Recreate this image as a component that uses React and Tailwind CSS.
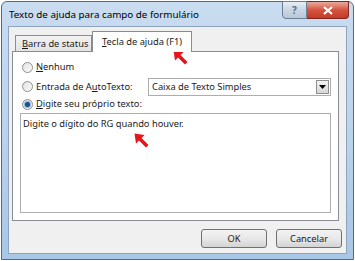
import React from 'react';

const Arrow = ({ className }) => (
  <svg className={className} width="16" height="16" viewBox="0 0 16 16">
    <path d="M0.5 0.5 L10.5 2 L7.5 5 L14.5 12 L12 14.5 L5 7.5 L2 10.5 Z" fill="#e8141a" />
  </svg>
);

const Radio = ({ checked }) => (
  <span className="w-[11px] h-[11px] rounded-full border border-[#8e8f8f] bg-gradient-to-br from-[#e2e2e2] to-[#fbfbfb] flex items-center justify-center shrink-0">
    {checked && <span className="w-[5px] h-[5px] rounded-full bg-[#1c4f8a] shadow-[0_0_1px_1px_#7fb0e0]" />}
  </span>
);

export default function App() {
  return (
    <div className="w-[355px] h-[261px] bg-white p-[1px] overflow-hidden" style={{ fontFamily: '"Noto Sans", "Open Sans", sans-serif' }}>
      <div className="relative w-full h-full border border-[#4e6b8c] rounded-t-[6px] bg-gradient-to-b from-[#c9dcf0] via-[#bcd3ec] to-[#a8c6e6] flex flex-col px-[6px] pb-[5px]">
        {/* title bar */}
        <div className="h-[24px] flex items-start justify-between shrink-0">
          <span className="text-[9.8px] text-black pt-[6px] pl-[1px] whitespace-nowrap">Texto de ajuda para campo de formulário</span>
          <div className="flex -mt-[1px] mr-[-2px]">
            <div className="w-[25px] h-[18px] rounded-bl-[4px] border border-[#6d7f94] bg-gradient-to-b from-[#e8eef5] via-[#cbd6e3] to-[#b8c6d6] flex items-center justify-center text-[10px] font-bold text-[#5b6d82]">?</div>
            <div className="w-[42px] h-[18px] rounded-br-[4px] border border-l-0 border-[#7a2a20] bg-gradient-to-b from-[#e9a99c] via-[#d3533f] to-[#c43b27] flex items-center justify-center">
              <svg width="10" height="9" viewBox="0 0 10 9">
                <path d="M1 1 L9 8 M9 1 L1 8" stroke="white" strokeWidth="2.2" />
              </svg>
            </div>
          </div>
        </div>

        {/* client area */}
        <div className="flex-1 bg-[#f0f0f0] border border-[#8ea4be] flex flex-col pl-[3px] pr-[7px] pt-[4px] text-[9.3px] text-[#1a1a1a] whitespace-nowrap">
          {/* tabs */}
          <div className="flex items-end h-[20px] relative z-10">
            <div className="ml-[3px] h-[16px] w-[77px] px-[6px] border border-b-0 border-[#898c95] bg-gradient-to-b from-[#f2f2f2] to-[#e3e3e3] flex items-center">
              <span><u>B</u>arra de status</span>
            </div>
            <div className="h-[21px] -mb-[1px] w-[100px] px-[9px] border border-b-0 border-[#898c95] bg-white flex items-center">
              <span><u>T</u>ecla de ajuda (F1)</span>
            </div>
          </div>

          {/* panel */}
          <div className="h-[170px] bg-white border border-[#898c95] flex flex-col px-[7px] pt-[7px]">
            <div className="flex items-center gap-[3px] h-[16px] pl-[2px]">
              <Radio />
              <span><u>N</u>enhum</span>
            </div>
            <div className="flex items-center h-[19px] mt-[2px]">
              <div className="flex items-center gap-[3px] pl-[2px] w-[128px]">
                <Radio />
                <span>Entrada de A<u>u</u>toTexto:</span>
              </div>
              <div className="flex-1 h-[18px] border border-[#abadb3] bg-white flex items-center justify-between pl-[3px] pr-[1px]">
                <span>Caixa de Texto Simples</span>
                <div className="w-[13px] h-[14px] border border-[#8d8d8d] bg-gradient-to-b from-[#f4f4f4] to-[#d6d6d6] flex items-center justify-center">
                  <svg width="7" height="4" viewBox="0 0 7 4"><path d="M0 0 H7 L3.5 4 Z" fill="#000" /></svg>
                </div>
              </div>
            </div>
            <div className="flex items-center gap-[3px] h-[16px] pl-[2px]">
              <Radio checked />
              <span><u>D</u>igite seu próprio texto:</span>
            </div>
            <div className="h-[100px] mt-[1px] border border-[#abadb3] bg-white px-[2px] pt-[3px]">
              <span>Digite o dígito do RG quando houver.</span>
            </div>
          </div>

          {/* buttons */}
          <div className="flex justify-end gap-[9px] mt-[8px] mr-[-3px]">
            <button className="w-[66px] h-[19px] rounded-[3px] border border-[#707070] bg-gradient-to-b from-[#f3f3f3] via-[#e8e8e8] to-[#d4d4d4] text-[9.3px]">OK</button>
            <button className="w-[66px] h-[19px] rounded-[3px] border border-[#707070] bg-gradient-to-b from-[#f3f3f3] via-[#e8e8e8] to-[#d4d4d4] text-[9.3px]">Cancelar</button>
          </div>
        </div>

        <Arrow className="absolute left-[171px] top-[48px]" />
        <Arrow className="absolute left-[132px] top-[131px]" />
      </div>
    </div>
  );
}
